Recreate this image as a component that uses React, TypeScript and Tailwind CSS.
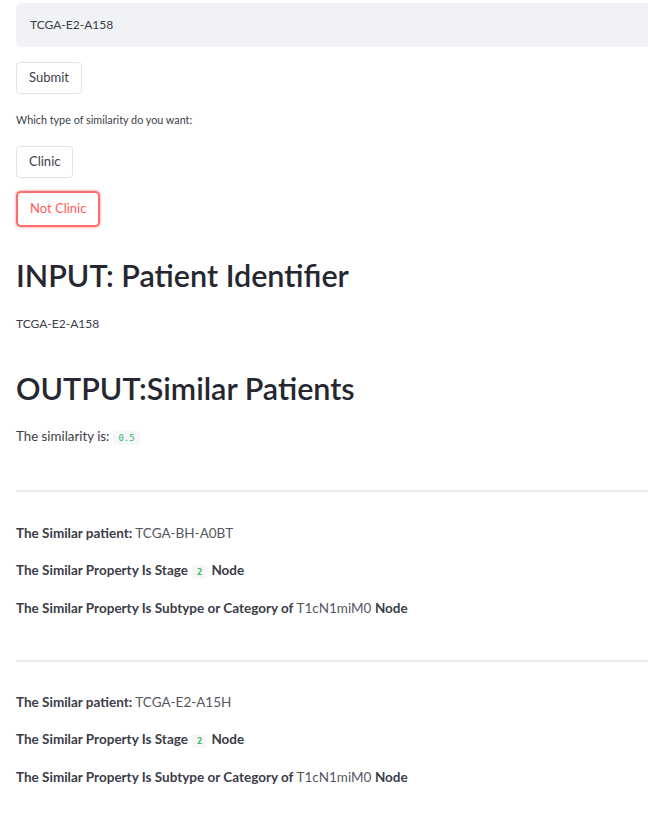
const font = { fontFamily: '"Lato", "Open Sans", sans-serif' };

function Btn({ label, active }: { label: string; active?: boolean }) {
  return (
    <button
      className={
        active
          ? 'h-[36px] px-[12px] rounded-[5px] border-2 border-[#ff6b6b] text-[#ff5a5a] text-[13px] bg-white shadow-[0_0_2px_1px_rgba(255,75,75,0.35)]'
          : 'h-[32px] px-[12px] rounded-[4px] border border-[#e2e3e8] text-[#3b3d48] text-[13px] bg-white'
      }
    >
      {label}
    </button>
  );
}

function Code({ children }: { children: string }) {
  return (
    <code
      className="mx-[4px] px-[5px] py-[2px] rounded-[3px] bg-[#f6f7f8] text-[#3cb46e] text-[9px]"
      style={{ fontFamily: '"DejaVu Sans Mono", monospace' }}
    >
      {children}
    </code>
  );
}

function Match({ id }: { id: string }) {
  return (
    <div className="flex flex-col gap-[17px] text-[13.5px] leading-[20px] text-[#3b3d48]">
      <p>
        <b>The Similar patient:</b> <span className="text-[#55575f]">{id}</span>
      </p>
      <p>
        <b>
          The Similar Property Is Stage<Code>2</Code>Node
        </b>
      </p>
      <p className="-mt-[1px]">
        <b>The Similar Property Is Subtype or Category of </b>
        <span className="text-[#55575f]">T1cN1miM0</span> <b>Node</b>
      </p>
    </div>
  );
}

export default function App() {
  return (
    <div className="min-h-[829px] bg-white pl-[16px] pt-[3px] overflow-hidden" style={font}>
      <div className="h-[44px] w-[700px] rounded-[6px] bg-[#f0f2f6] flex items-center pl-[14px] text-[12px] text-[#3b3d48]">
        TCGA-E2-A158
      </div>
      <div className="mt-[15px]">
        <Btn label="Submit" />
      </div>
      <p className="mt-[18px] text-[10.8px] text-[#3b3d48] leading-[16px]">Which type of similarity do you want:</p>
      <div className="mt-[18px]">
        <Btn label="Clinic" />
      </div>
      <div className="mt-[13px]">
        <Btn label="Not Clinic" active />
      </div>
      <h1 className="mt-[28px] text-[30.5px] leading-[40px] font-semibold text-[#262730]">INPUT: Patient Identifier</h1>
      <p className="mt-[21px] text-[12px] text-[#3b3d48] leading-[16px]">TCGA-E2-A158</p>
      <h1 className="mt-[36px] text-[30.5px] leading-[40px] font-semibold text-[#262730]">OUTPUT:Similar Patients</h1>
      <p className="mt-[20px] text-[13.3px] text-[#3b3d48] leading-[16px]">
        The similarity is:<Code>0.5</Code>
      </p>
      <hr className="mt-[44px] border-t-2 border-[#e8e9ec] w-[700px]" />
      <div className="mt-[31px]">
        <Match id="TCGA-BH-A0BT" />
      </div>
      <hr className="mt-[42px] border-t-2 border-[#e8e9ec] w-[700px]" />
      <div className="mt-[30px]">
        <Match id="TCGA-E2-A15H" />
      </div>
    </div>
  );
}
